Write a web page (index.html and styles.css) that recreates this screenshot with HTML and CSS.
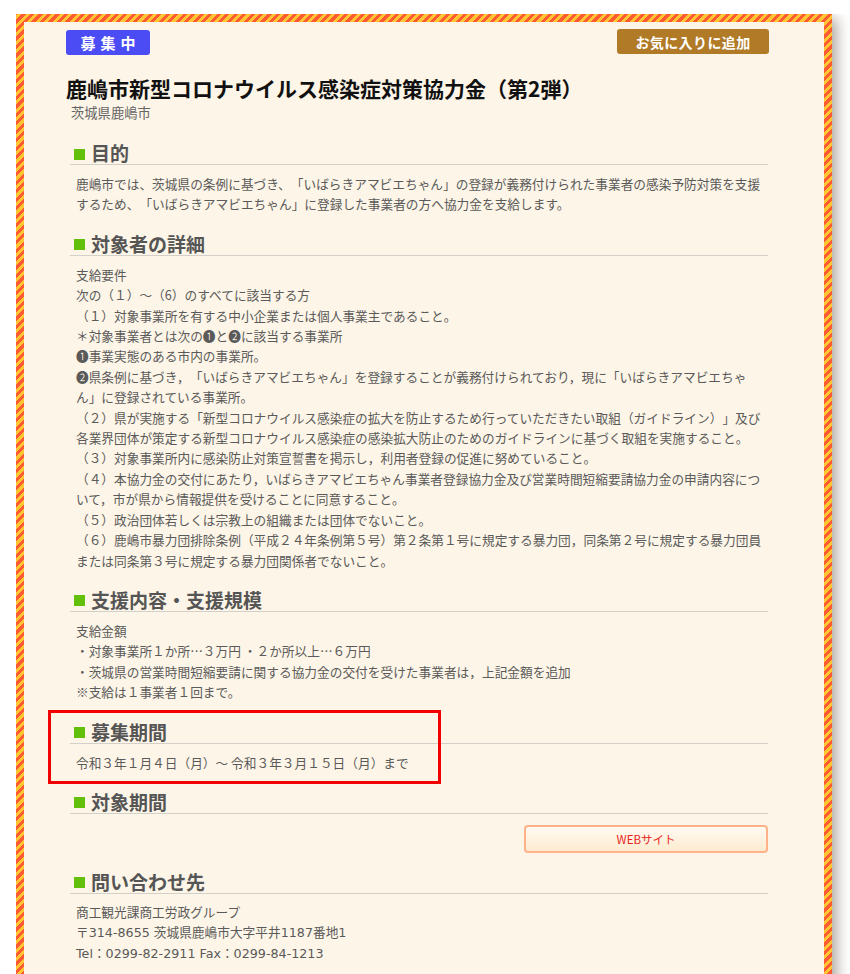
FILE: index.html
```html
<!DOCTYPE html>
<html lang="ja">
<head>
<meta charset="utf-8">
<title>鹿嶋市新型コロナウイルス感染症対策協力金（第2弾）</title>
<link rel="stylesheet" href="styles.css">
</head>
<body>
<div class="frame">
  <div class="toprow">
    <span class="badge">募集中</span>
    <a class="fav">お気に入りに追加</a>
  </div>
  <h1 class="title">鹿嶋市新型コロナウイルス感染症対策協力金（第2弾）</h1>
  <p class="sub">茨城県鹿嶋市</p>

  <section class="sec">
    <h2 class="hd"><span class="sq"></span>目的</h2>
    <p class="txt">鹿嶋市では、茨城県の条例に基づき、「いばらきアマビエちゃん」の登録が義務付けられた事業者の感染予防対策を支援<br>するため、「いばらきアマビエちゃん」に登録した事業者の方へ協力金を支給します。</p>
  </section>

  <section class="sec">
    <h2 class="hd"><span class="sq"></span>対象者の詳細</h2>
    <p class="txt">支給要件<br>次の（１）～（6）のすべてに該当する方<br>（１）対象事業所を有する中小企業または個人事業主であること。<br>＊対象事業者とは次の❶と❷に該当する事業所<br>❶事業実態のある市内の事業所。<br>❷県条例に基づき，「いばらきアマビエちゃん」を登録することが義務付けられており，現に「いばらきアマビエちゃ<br>ん」に登録されている事業所。<br>（２）県が実施する「新型コロナウイルス感染症の拡大を防止するため行っていただきたい取組（ガイドライン）」及び<br>各業界団体が策定する新型コロナウイルス感染症の感染拡大防止のためのガイドラインに基づく取組を実施すること。<br>（３）対象事業所内に感染防止対策宣誓書を掲示し，利用者登録の促進に努めていること。<br>（４）本協力金の交付にあたり，いばらきアマビエちゃん事業者登録協力金及び営業時間短縮要請協力金の申請内容につ<br>いて，市が県から情報提供を受けることに同意すること。<br>（５）政治団体若しくは宗教上の組織または団体でないこと。<br>（６）鹿嶋市暴力団排除条例（平成２４年条例第５号）第２条第１号に規定する暴力団，同条第２号に規定する暴力団員<br>または同条第３号に規定する暴力団関係者でないこと。</p>
  </section>

  <section class="sec">
    <h2 class="hd"><span class="sq"></span>支援内容・支援規模</h2>
    <p class="txt">支給金額<br>・対象事業所１か所…３万円 ・２か所以上…６万円<br>・茨城県の営業時間短縮要請に関する協力金の交付を受けた事業者は，上記金額を追加<br>※支給は１事業者１回まで。</p>
  </section>

  <section class="sec">
    <h2 class="hd"><span class="sq"></span>募集期間</h2>
    <p class="txt">令和３年１月４日（月）～ 令和３年３月１５日（月）まで</p>
  </section>

  <section class="sec">
    <h2 class="hd"><span class="sq"></span>対象期間</h2>
    <div class="btnrow"><a class="web">WEBサイト</a></div>
  </section>

  <section class="sec">
    <h2 class="hd"><span class="sq"></span>問い合わせ先</h2>
    <p class="txt contact">商工観光課商工労政グループ<br>〒314-8655 茨城県鹿嶋市大字平井1187番地1<br>Tel：0299-82-2911 Fax：0299-84-1213</p>
  </section>

  <div class="highlight"></div>
</div>
</body>
</html>
```

FILE: styles.css
```css
html, body {
  background: #ffffff;
}
body {
  margin: 14px 0 0 16px;
  font-family: "Noto Sans CJK JP", "Noto Sans", sans-serif;
  color: #5a5a5a;
  text-spacing-trim: space-all;
}
.frame {
  position: relative;
  box-sizing: border-box;
  width: 816px;
  min-height: 1010px;
  padding: 8px 55px 40px 42px;
  border: 8px solid transparent;
  background:
    linear-gradient(#fdf5e7, #fdf5e7) padding-box,
    repeating-linear-gradient(-45deg, #ff5b33 0 3px, #ffc634 3px 6px) border-box;
  box-shadow: 4px 4px 14px rgba(60, 40, 20, 0.45);
}
.toprow {
  display: flex;
  justify-content: space-between;
  align-items: flex-start;
  height: 25px;
}
.badge {
  display: flex;
  align-items: center;
  justify-content: center;
  width: 84px;
  height: 25px;
  background: #4b4cf3;
  border-radius: 3px;
  color: #fff;
  font-weight: bold;
  font-size: 15px;
  letter-spacing: 5px;
  text-indent: 5px;
}
.fav {
  display: flex;
  align-items: center;
  justify-content: center;
  width: 152px;
  height: 25px;
  margin-top: -1px;
  background: #b07a27;
  border-radius: 3px;
  color: #fff;
  font-weight: bold;
  font-size: 14px;
  letter-spacing: 0.4px;
}
.title {
  margin: 19px 0 0 0;
  font-size: 21px;
  line-height: 28px;
  font-weight: bold;
  color: #111;
}
.sub {
  margin: 1px 0 0 5px;
  font-size: 13.3px;
  line-height: 20px;
  color: #666;
}
.sec {
  margin: 19px 1px 0 4px;
}
.sec + .sec {
  margin-top: 18px;
}
.hd {
  display: flex;
  align-items: center;
  gap: 6px;
  margin: 0;
  padding-left: 4px;
  height: 22px;
  font-size: 19px;
  line-height: 22px;
  font-weight: bold;
  color: #555;
  border-bottom: 1px solid #d3d0ca;
}
.sq {
  width: 11px;
  height: 11px;
  background: #62bf0a;
  margin-top: 2px;
}
.txt {
  margin: 9px 0 0 0;
  padding-left: 6px;
  font-size: 12.7px;
  line-height: 20.4px;
  white-space: nowrap;
  color: #5a5a5a;
}
.contact {
  font-family: "DejaVu Sans", "Noto Sans CJK JP", sans-serif;
}
.btnrow {
  display: flex;
  justify-content: flex-end;
  margin-top: 11px;
}
.web {
  box-sizing: border-box;
  display: flex;
  align-items: center;
  justify-content: center;
  width: 244px;
  height: 28px;
  border: 2px solid #ffb189;
  border-radius: 4px;
  background: linear-gradient(#fffaf1, #fdebd0);
  color: #e8241d;
  font-size: 11.5px;
}
.highlight {
  position: absolute;
  box-sizing: border-box;
  left: 24px;
  top: 688px;
  width: 393px;
  height: 74px;
  border: 3px solid #f00000;
}
```
